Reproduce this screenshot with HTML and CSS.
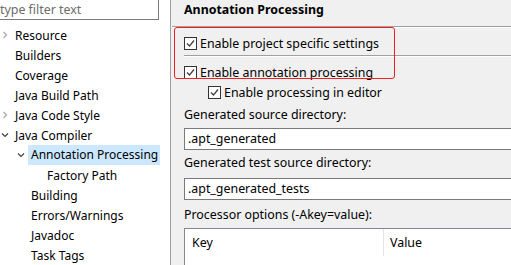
FILE: index.html
```html
<!DOCTYPE html>
<html>
<head>
<meta charset="utf-8">
<link rel="stylesheet" href="styles.css">
</head>
<body>
<div class="app">
  <div class="left">
    <div class="filter"><span class="filter-text">type filter text</span></div>
    <ul class="tree">
      <li class="row"><span class="tw"><svg width="8" height="8" viewBox="0 0 8 8"><path d="M2.5 1 L5.5 4 L2.5 7" fill="none" stroke="#a6a6a6" stroke-width="1.2"/></svg></span>Resource</li>
      <li class="row"><span class="tw"></span>Builders</li>
      <li class="row"><span class="tw"></span>Coverage</li>
      <li class="row"><span class="tw"></span>Java Build Path</li>
      <li class="row"><span class="tw"><svg width="8" height="8" viewBox="0 0 8 8"><path d="M2.5 1 L5.5 4 L2.5 7" fill="none" stroke="#a6a6a6" stroke-width="1.2"/></svg></span>Java Code Style</li>
      <li class="row"><span class="tw tw-open"><svg width="8" height="8" viewBox="0 0 8 8"><path d="M1 2.5 L4 5.5 L7 2.5" fill="none" stroke="#404040" stroke-width="1.2"/></svg></span>Java Compiler</li>
      <li class="row l1"><span class="tw tw-open"><svg width="8" height="8" viewBox="0 0 8 8"><path d="M1 2.5 L4 5.5 L7 2.5" fill="none" stroke="#404040" stroke-width="1.2"/></svg></span><span class="sel">Annotation Processing</span></li>
      <li class="row l2"><span class="tw"></span>Factory Path</li>
      <li class="row l1"><span class="tw"></span>Building</li>
      <li class="row l1"><span class="tw"></span>Errors/Warnings</li>
      <li class="row l1"><span class="tw"></span>Javadoc</li>
      <li class="row l1"><span class="tw"></span>Task Tags</li>
    </ul>
  </div>
  <div class="right">
    <div class="title">Annotation Processing</div>
    <div class="sep sep-full"></div>
    <div class="content">
      <div class="check c1"><span class="box"><svg width="11" height="11" viewBox="0 0 11 11"><path d="M2 5.5 L4.5 8 L9 2.5" fill="none" stroke="#404040" stroke-width="1.3"/></svg></span>Enable project specific settings</div>
      <div class="sep sep-inner"></div>
      <div class="check c2"><span class="box"><svg width="11" height="11" viewBox="0 0 11 11"><path d="M2 5.5 L4.5 8 L9 2.5" fill="none" stroke="#404040" stroke-width="1.3"/></svg></span>Enable annotation processing</div>
      <div class="check c3"><span class="box"><svg width="11" height="11" viewBox="0 0 11 11"><path d="M2 5.5 L4.5 8 L9 2.5" fill="none" stroke="#404040" stroke-width="1.3"/></svg></span>Enable processing in editor</div>
      <div class="label l-a">Generated source directory:</div>
      <div class="field f-a">.apt_generated</div>
      <div class="label l-b">Generated test source directory:</div>
      <div class="field f-b">.apt_generated_tests</div>
      <div class="label l-c">Processor options (-Akey=value):</div>
      <div class="table">
        <div class="th th-key">Key</div>
        <div class="th th-val">Value</div>
      </div>
    </div>
    <div class="highlight"></div>
  </div>
</div>
</body>
</html>
```
FILE: styles.css
```css
html, body {
  margin: 0;
  padding: 0;
  width: 511px;
  height: 265px;
  overflow: hidden;
}
body {
  font-family: "Noto Sans", "Open Sans", sans-serif;
  font-size: 12.4px;
  color: #000;
}
.app {
  display: flex;
  width: 511px;
  height: 265px;
}
.left {
  width: 170px;
  flex: none;
  background: #fff;
  border-right: 1px solid #a0a0a0;
  overflow: hidden;
  font-size: 12px;
}
.filter {
  width: 180px;
  height: 24px;
  margin-top: -4px;
  margin-left: -21px;
  border: 1px solid #7a7a7a;
  box-sizing: border-box;
  background: #fff;
  display: flex;
  align-items: center;
  padding-left: 20px;
  padding-top: 3px;
}
.filter-text {
  color: #6d6d6d;
  line-height: 16px;
  font-size: 12.4px;
}
.tree {
  list-style: none;
  margin: 5px 0 0 0;
  padding: 0;
}
.row {
  height: 20px;
  display: flex;
  align-items: center;
  white-space: nowrap;
}
.row.l1 { padding-left: 16px; }
.row.l2 { padding-left: 32px; }
.tw {
  width: 15px;
  flex: none;
  display: flex;
  align-items: center;
  padding-left: 1px;
  box-sizing: border-box;
}
.tw svg { display: block; }
.sel {
  background: #cce8ff;
  height: 20px;
  line-height: 20px;
  margin-left: -3px;
  padding-left: 3px;
  width: 129px;
}
.right {
  flex: 1;
  background: #f0f0f0;
  position: relative;
  overflow: hidden;
}
.title {
  height: 26px;
  box-sizing: border-box;
  padding-left: 13px;
  padding-top: 1px;
  font-weight: bold;
  font-size: 12.4px;
  line-height: 18px;
}
.sep {
  height: 1px;
  background: #a0a0a0;
  border-bottom: 1px solid #fff;
}
.sep-full { margin-left: 1px; }
.content {
  padding-left: 13px;
  display: flex;
  flex-direction: column;
}
.check {
  height: 13px;
  display: flex;
  align-items: center;
  white-space: nowrap;
  line-height: 13px;
}
.box {
  width: 13px;
  height: 13px;
  box-sizing: border-box;
  border: 1px solid #333;
  background: #fff;
  margin-right: 3px;
  flex: none;
  display: flex;
  align-items: center;
  justify-content: center;
}
.box svg { display: block; }
.c1 { margin-top: 9px; }
.sep-inner { margin-top: 5px; margin-right: -20px; }
.c2 { margin-top: 9px; }
.c3 { margin-top: 7px; padding-left: 24px; }
.label {
  height: 16px;
  line-height: 16px;
  white-space: nowrap;
}
.l-a { margin-top: 8px; }
.l-b { margin-top: 5px; }
.l-c { margin-top: 7px; }
.field {
  height: 22px;
  box-sizing: border-box;
  border: 1px solid #7a7a7a;
  border-right: none;
  background: #fff;
  width: 340px;
  padding-left: 3px;
  line-height: 20px;
  white-space: nowrap;
}
.f-a { margin-top: 5px; }
.f-b { margin-top: 7px; }
.table {
  margin-top: 5px;
  height: 60px;
  width: 340px;
  box-sizing: border-box;
  border: 1px solid #828790;
  border-right: none;
  background: #fff;
  display: flex;
}
.th {
  height: 27px;
  line-height: 27px;
  padding-left: 7px;
  box-sizing: border-box;
}
.th-key {
  width: 199px;
  border-right: 1px solid #e5e5e5;
}
.th-val { flex: 1; padding-left: 6px; }
.highlight {
  position: absolute;
  left: 3px;
  top: 27px;
  width: 221px;
  height: 52px;
  box-sizing: border-box;
  border: 1px solid #f02020;
  border-radius: 3px;
}
```
